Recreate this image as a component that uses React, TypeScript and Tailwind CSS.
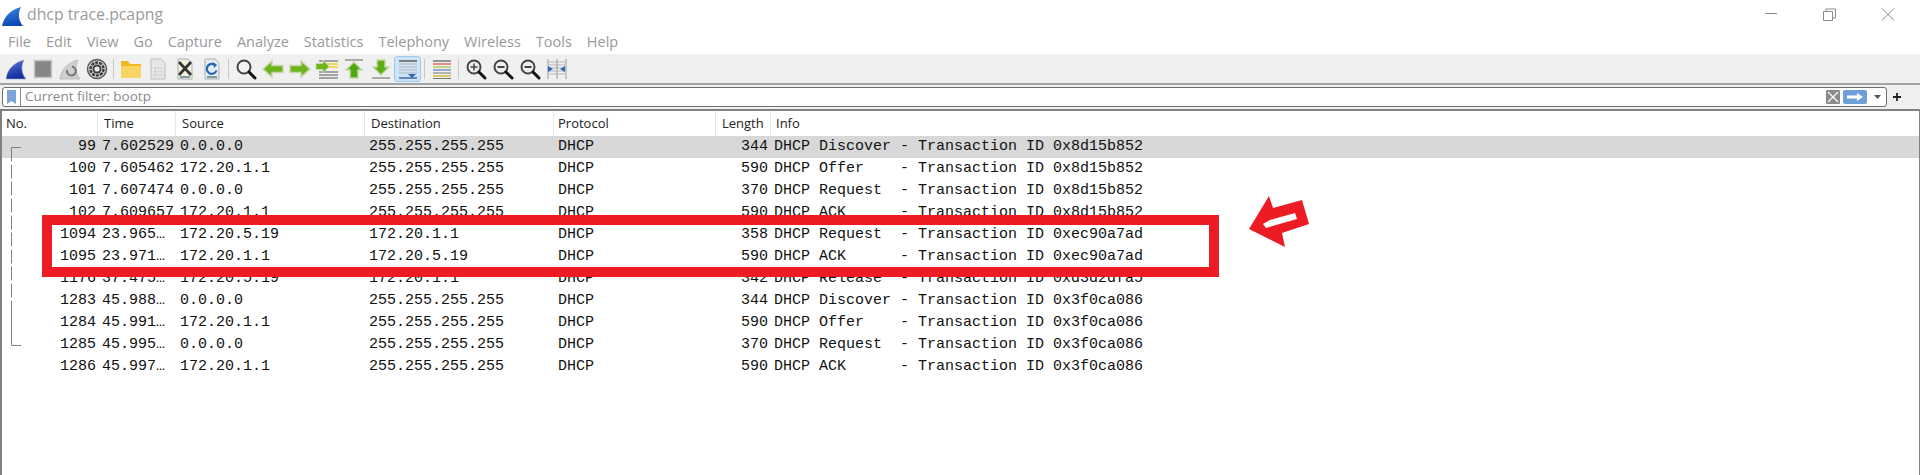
import React from "react";

const MENU = ["File","Edit","View","Go","Capture","Analyze","Statistics","Telephony","Wireless","Tools","Help"];

const ROWS: [string,string,string,string,string,string][] = [
  ["99","7.602529","0.0.0.0","255.255.255.255","344","DHCP Discover - Transaction ID 0x8d15b852"],
  ["100","7.605462","172.20.1.1","255.255.255.255","590","DHCP Offer    - Transaction ID 0x8d15b852"],
  ["101","7.607474","0.0.0.0","255.255.255.255","370","DHCP Request  - Transaction ID 0x8d15b852"],
  ["102","7.609657","172.20.1.1","255.255.255.255","590","DHCP ACK      - Transaction ID 0x8d15b852"],
  ["1094","23.965…","172.20.5.19","172.20.1.1","358","DHCP Request  - Transaction ID 0xec90a7ad"],
  ["1095","23.971…","172.20.1.1","172.20.5.19","590","DHCP ACK      - Transaction ID 0xec90a7ad"],
  ["1176","37.475…","172.20.5.19","172.20.1.1","342","DHCP Release  - Transaction ID 0xd3d2dfa5"],
  ["1283","45.988…","0.0.0.0","255.255.255.255","344","DHCP Discover - Transaction ID 0x3f0ca086"],
  ["1284","45.991…","172.20.1.1","255.255.255.255","590","DHCP Offer    - Transaction ID 0x3f0ca086"],
  ["1285","45.995…","0.0.0.0","255.255.255.255","370","DHCP Request  - Transaction ID 0x3f0ca086"],
  ["1286","45.997…","172.20.1.1","255.255.255.255","590","DHCP ACK      - Transaction ID 0x3f0ca086"],
];

function Cell({ children, active }: { children: React.ReactNode; active?: boolean }) {
  return (
    <div className={`w-[27px] h-[26px] flex items-center justify-center shrink-0 rounded-[3px] ${active ? "bg-[#cde4f7] border border-[#9ccbf0]" : ""}`}>
      <svg width="24" height="24" viewBox="0 0 24 24">{children}</svg>
    </div>
  );
}

function Sep() {
  return (
    <div className="w-[7px] h-[26px] flex justify-center items-center shrink-0">
      <div className="w-px h-[20px] bg-[#c8c8c8]" />
    </div>
  );
}

function Mag({ sign }: { sign?: "plus" | "minus" | "none" }) {
  return (
    <>
      <circle cx="10" cy="10" r="6.5" fill={sign === "none" ? "#f4f4f4" : "#eeeeee"} stroke="#444" strokeWidth="2" />
      <path d="M15 15l6 6" stroke="#111" strokeWidth="3" strokeLinecap="round" />
      {sign === "plus" && <path d="M6.5 10h7M10 6.5v7" stroke="#444" strokeWidth="1.5" />}
      {sign === "minus" && <path d="M6.5 10h7" stroke="#444" strokeWidth="2" />}
    </>
  );
}

function Lines() {
  return <path d="M4 5h16M4 8h16M4 11h16M4 14h16M4 17h16" stroke="#b5b5b5" strokeWidth="1" />;
}

export default function App() {
  return (
    <div className="w-[1920px] h-[475px] bg-white overflow-hidden flex flex-col font-['Open_Sans',sans-serif]">
      {/* Title bar */}
      <div className="h-[30px] shrink-0 flex items-center">
        <svg width="24" height="24" viewBox="0 0 24 24" className="ml-[1px] shrink-0">
          <defs>
            <linearGradient id="fin" x1="0" y1="0" x2="0.3" y2="1">
              <stop offset="0" stopColor="#3f8ee8" />
              <stop offset="1" stopColor="#0d47b5" />
            </linearGradient>
          </defs>
          <path d="M1 23C3 13 11 6 20 4c-3 6-3 13 2 19z" fill="url(#fin)" />
        </svg>
        <div className="ml-[2px] text-[15.8px] text-[#9b9b9b] leading-none">dhcp trace.pcapng</div>
        <div className="ml-auto flex items-center h-full">
          <svg width="170" height="30" viewBox="0 0 170 30">
            <path d="M15 13.5h12" stroke="#8a8a8a" strokeWidth="1" />
            <path d="M73.5 11.5h9v9h-9zM76 11V9h9.5v9h-3" fill="none" stroke="#8a8a8a" strokeWidth="1" />
            <path d="M132 8.5l12 12M144 8.5l-12 12" stroke="#8a8a8a" strokeWidth="1" />
          </svg>
        </div>
      </div>

      {/* Menu bar */}
      <div className="h-[25px] shrink-0 flex items-center gap-[15px] pl-[8px] text-[14.5px] text-[#999999] border-b border-[#efefef]">
        {MENU.map((m) => <span key={m}>{m}</span>)}
      </div>

      {/* Toolbar */}
      <div className="h-[30px] shrink-0 bg-[#f0f0f0] border-b-2 border-[#a3a3a3] flex items-center pl-[2px]">
        <Cell>
          <defs>
            <linearGradient id="fin2" x1="0" y1="0" x2="0.3" y2="1">
              <stop offset="0" stopColor="#5a78d8" />
              <stop offset="1" stopColor="#142c9c" />
            </linearGradient>
          </defs>
          <path d="M2 22C3 12 11 5 20 3c-3 6-3 13 2 19z" fill="url(#fin2)" stroke="#9aa5c8" strokeWidth=".6" />
        </Cell>
        <Cell><rect x="3.5" y="3.5" width="17" height="17" fill="#868686" stroke="#c4c4c4" strokeWidth="1.5" /></Cell>
        <Cell>
          <path d="M2 22C3 12 11 5 20 3c-3 6-3 13 2 19z" fill="#cfcfcf" stroke="#b0b0b0" strokeWidth=".7" />
          <path d="M9 13a4.500 4.500 0 1 0 5-3.500" fill="none" stroke="#777" strokeWidth="2" />
        </Cell>
        <Cell>
          <circle cx="12" cy="12" r="9.5" fill="#d4d4d4" stroke="#5a5a5a" strokeWidth="1.5" />
          <circle cx="12" cy="12" r="6.5" fill="none" stroke="#3c3c3c" strokeWidth="2.4" strokeDasharray="3 1" />
          <circle cx="12" cy="12" r="4.5" fill="#3c3c3c" />
          <circle cx="12" cy="12" r="2.6" fill="#eeeeee" />
        </Cell>
        <Sep />
        <Cell>
          <path d="M2 4h7l2 3h11v14H2z" fill="#f3b820" />
          <path d="M2 9h20v12H2z" fill="#fad463" />
        </Cell>
        <Cell>
          <path d="M5 2h10l4 4v16H5z" fill="#e6e6e6" stroke="#bdbdbd" />
          <path d="M8 10h8v9H8z" fill="#cfcfcf" />
          <path d="M8 13h8M8 16h8M11 10v9M14 10v9" stroke="#eeeeee" strokeWidth="1" />
        </Cell>
        <Cell>
          <path d="M5 2h10l4 4v16H5z" fill="#f3f0dc" stroke="#a8b0b0" />
          <path d="M6 5l12 13M18 5L6 18" stroke="#333" strokeWidth="2.6" />
          <path d="M7 20h10" stroke="#7d9a9a" strokeWidth="2" />
        </Cell>
        <Cell>
          <path d="M5 2h10l4 4v16H5z" fill="#e3edf2" stroke="#a8b0b0" />
          <path d="M15.500 8.500a5 5 0 1 0 1 5" fill="none" stroke="#2a66b8" strokeWidth="2.2" />
          <path d="M13 5l4 3-3 3z" fill="#2a66b8" />
          <path d="M7 20h10" stroke="#7d9a9a" strokeWidth="2" />
        </Cell>
        <Sep />
        <Cell><Mag sign="none" /></Cell>
        <Cell>
          <path d="M2 12l9-8v4.500h11v7H11V20z" fill="#6fb21c" stroke="#c5d8ac" strokeWidth="1.5" />
        </Cell>
        <Cell>
          <path d="M22 12l-9-8v4.500H2v7h11V20z" fill="#6fb21c" stroke="#c5d8ac" strokeWidth="1.5" />
        </Cell>
        <Cell>
          <path d="M4 4h19M4 15h19M4 18h19M4 21h19" stroke="#555" strokeWidth="1.2" />
          <path d="M4 7h19M4 10h19" stroke="#f1d85a" strokeWidth="2" />
          <path d="M14 9.500L8 3v3.500H1v6h7V16z" fill="#6fb21c" stroke="#c5d8ac" />
        </Cell>
        <Cell>
          <path d="M3 3h18" stroke="#aaaaaa" strokeWidth="2" />
          <path d="M12 5l8 8h-4v8H8v-8H4z" fill="#4fa90f" stroke="#c5d8ac" strokeWidth="1.500" />
        </Cell>
        <Cell>
          <path d="M3 21h18" stroke="#aaaaaa" strokeWidth="2" />
          <path d="M12 18l8-8h-4V3H8v7H4z" fill="#5cae14" stroke="#c5d8ac" strokeWidth="1.500" />
        </Cell>
        <Cell active>
          <path d="M3 4h18" stroke="#555" strokeWidth="1.4" />
          <path d="M3 7h18M3 10h18M3 13h18M3 16h18" stroke="#b5b5b5" strokeWidth="1" />
          <path d="M3 21h18" stroke="#3a5f9e" strokeWidth="1.4" />
          <path d="M12 17h8l-4 4z" fill="#2a66b8" />
        </Cell>
        <Sep />
        <Cell>
          <path d="M3 4h18" stroke="#555" strokeWidth="1.2" />
          <path d="M3 7h18" stroke="#e0605a" strokeWidth="1.4" />
          <path d="M3 10h18" stroke="#a9c84a" strokeWidth="1.4" />
          <path d="M3 13h18" stroke="#7a86c8" strokeWidth="1.4" />
          <path d="M3 16h18" stroke="#8a8a8a" strokeWidth="1.2" />
          <path d="M3 19h18" stroke="#d8b02a" strokeWidth="1.4" />
          <path d="M3 21.500h18" stroke="#777" strokeWidth="1" />
        </Cell>
        <Sep />
        <Cell><Mag sign="plus" /></Cell>
        <Cell><Mag sign="minus" /></Cell>
        <Cell><Mag sign="minus" /></Cell>
        <Cell>
          <Lines />
          <path d="M3 2v20M12 2v20M21 2v20" stroke="#9a9a9a" strokeWidth="1" />
          <path d="M3 9l5 3-5 3zM20 9l-5 3 5 3z" fill="#2a66b8" />
        </Cell>
      </div>

      {/* Filter row */}
      <div className="h-[24px] shrink-0 bg-[#f0f0f0] flex items-center pl-[2px]">
        <div className="w-[1885px] h-[20px] bg-white border border-[#6f6f6f] rounded-[3px] flex items-center">
          <div className="w-[18px] h-full border-r border-[#8a8a8a] flex items-center justify-center">
            <svg width="9" height="14" viewBox="0 0 9 14"><path d="M0 0h9v14l-4.500-3L0 14z" fill="#7ba4d8" /></svg>
          </div>
          <div className="pl-[4px] text-[13.5px] leading-none text-[#8a8a8a]">Current filter: bootp</div>
          <div className="ml-auto flex items-center">
            <div className="w-[14px] h-[14px] bg-[#8c8c8c] rounded-[1px] flex items-center justify-center">
              <svg width="12" height="12" viewBox="0 0 12 12"><path d="M1 1l10 10M11 1L1 11" stroke="#fff" strokeWidth="1.2" /></svg>
            </div>
            <div className="ml-[3px] w-[24px] h-[14px] bg-[#6f9fd8] rounded-[2px] flex items-center justify-center">
              <svg width="18" height="10" viewBox="0 0 18 10"><path d="M1 3.500h10V1l6 4-6 4V6.500H1z" fill="#fff" /></svg>
            </div>
            <svg width="19" height="14" viewBox="0 0 19 14"><path d="M7 5h7l-3.500 4z" fill="#555" /></svg>
          </div>
        </div>
        <svg width="12" height="12" viewBox="0 0 12 12" className="ml-[4px]"><path d="M6 2v8M2 6h8" stroke="#222" strokeWidth="1.8" /></svg>
      </div>

      {/* Packet list */}
      <div className="relative flex-1 border-t-2 border-l-2 border-r border-[#808080] bg-white">
        <div className="h-[25px] flex items-center text-[13px] text-[#222222] leading-none">
          <div className="w-[96px] h-full flex items-center pl-[4px] border-r border-[#e6e6e6]">No.</div>
          <div className="w-[78px] h-full flex items-center pl-[6px] border-r border-[#e6e6e6]">Time</div>
          <div className="w-[189px] h-full flex items-center pl-[6px] border-r border-[#e6e6e6]">Source</div>
          <div className="w-[189px] h-full flex items-center pl-[6px] border-r border-[#e6e6e6]">Destination</div>
          <div className="w-[162px] h-full flex items-center pl-[4px] border-r border-[#e6e6e6]">Protocol</div>
          <div className="w-[55px] h-full flex items-center pl-[6px] border-r border-[#e6e6e6]">Length</div>
          <div className="flex-1 h-full flex items-center pl-[5px]">Info</div>
        </div>
        <div className="font-['Liberation_Mono',monospace] text-[15px] text-[#111111] whitespace-pre">
          {ROWS.map((r, i) => (
            <div key={r[0]} className={`h-[22px] flex items-center ${i === 0 ? "bg-[#d8d8d8]" : ""}`}>
              <div className="w-[96px] text-right pr-[2px]">{r[0]}</div>
              <div className="w-[78px] pl-[4px]">{r[1]}</div>
              <div className="w-[189px] pl-[4px]">{r[2]}</div>
              <div className="w-[189px] pl-[4px]">{r[3]}</div>
              <div className="w-[162px] pl-[4px]">DHCP</div>
              <div className="w-[55px] text-right pr-[3px]">{r[4]}</div>
              <div className="flex-1 pl-[3px]">{r[5]}</div>
            </div>
          ))}
        </div>

        {/* Conversation tree */}
        <svg width="14" height="202" viewBox="0 0 14 202" className="absolute left-[9px] top-[36px]">
          <path d="M0.500 0.500H10" stroke="#808080" fill="none" />
          <path d="M0.500 0.500V160" stroke="#808080" strokeDasharray="14 3" fill="none" />
          <path d="M0.500 160V198.500H10" stroke="#808080" fill="none" />
        </svg>

        {/* Annotation box */}
        <div className="absolute left-[40px] top-[104px] w-[1177px] h-[62px] border-[10px] border-[#ed1c24]" />

        {/* Annotation arrow */}
        <svg width="70" height="60" viewBox="1245 192 70 60" className="absolute left-[1243px] top-[81px]">
          <path d="M1249 229L1269 196L1273 208L1302 200L1309 224L1282 233L1285 247Z" fill="#ed1c24" />
          <path d="M1263 224L1270 220L1295 213L1297 219L1266 228Z" fill="#fff" />
        </svg>
      </div>
    </div>
  );
}
